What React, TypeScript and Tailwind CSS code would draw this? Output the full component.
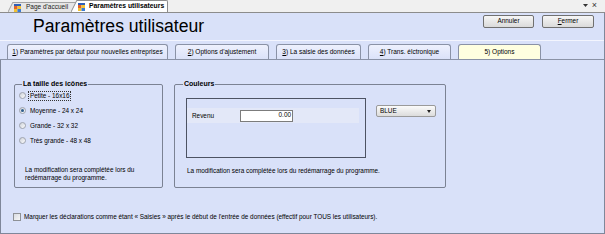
import React from "react";

const small = "text-[6.4px] leading-[8px] text-black";

function TabIcon() {
  return (
    <svg width="7" height="8" viewBox="0 0 7 8" className="shrink-0">
      <rect x="0" y="0" width="7" height="2" fill="#2f5fb8" />
      <rect x="0" y="2" width="3.5" height="3" fill="#e2622a" />
      <rect x="3.5" y="2" width="3.5" height="3" fill="#f2c232" />
      <rect x="0" y="5" width="3.5" height="3" fill="#f2c232" />
      <rect x="3.5" y="5" width="3.5" height="3" fill="#3a7bd5" />
    </svg>
  );
}

function Radio({ checked, label, focus }: { checked?: boolean; label: string; focus?: boolean }) {
  return (
    <div className="h-[15px] flex items-center">
      <div className="ml-[4px] w-[7px] h-[7px] rounded-full border border-[#9ea3ad] bg-gradient-to-br from-[#cfd3da] to-[#fbfbfb] flex items-center justify-center">
        {checked && <div className="w-[3px] h-[3px] rounded-full bg-[#2f5e8c]" />}
      </div>
      <span
        className={
          "ml-[2px] px-[1px] border border-dotted " +
          (focus ? "border-[#333]" : "border-transparent") +
          " " +
          small
        }
      >
        {label}
      </span>
    </div>
  );
}

function SubTab({ w, active, children }: { w: number; active?: boolean; children: React.ReactNode }) {
  return (
    <div
      style={{ width: w }}
      className={
        "h-[15px] rounded-t-[3px] border border-b-0 border-[#8a92a6] flex items-center justify-center text-[6.5px] text-black " +
        (active ? "bg-[#ffffe0]" : "bg-gradient-to-b from-[#eef1fd] to-[#dbe2f9]")
      }
    >
      {children}
    </div>
  );
}

export default function App() {
  return (
    <div className="w-[605px] h-[234px] bg-[#f0f0f0] flex flex-col overflow-hidden font-['Liberation_Sans',Arial,sans-serif]">
      {/* document tabs */}
      <div className="h-[13px] border-b border-[#8c8c8c] flex items-end shrink-0">
        <div className="w-[8px]" />
        <div className="flex items-end">
          <svg width="5" height="10" viewBox="0 0 5 10" className="block">
            <path d="M0 10 L5 0 L5 10 Z" fill="#e6e6e6" />
            <path d="M0 10 L5 0" stroke="#a3a3a3" strokeWidth="1" fill="none" />
          </svg>
          <div className="h-[10px] w-[63px] bg-[#e6e6e6] border-t border-[#a3a3a3] flex items-center pl-[1px] gap-[5px]">
            <TabIcon />
            <span className="text-[6.5px] leading-none text-[#222]">Page d'accueil</span>
          </div>
        </div>
        <div className="flex items-end ml-[-5px] relative">
          <svg width="6" height="12" viewBox="0 0 6 12" className="block">
            <path d="M0 12 L6 0 L6 12 Z" fill="#ffffff" />
            <path d="M0 12 L6 0" stroke="#8c8c8c" strokeWidth="1" fill="none" />
          </svg>
          <div className="h-[12px] w-[91px] bg-white border-t border-r border-[#8c8c8c] rounded-tr-[2px] flex items-center pl-[1px] gap-[4px]">
            <TabIcon />
            <span className="text-[6.8px] leading-none font-bold text-black">Paramètres utilisateurs</span>
          </div>
        </div>
        <div className="flex-1" />
        <div className="self-center flex items-center gap-[4px] pr-[8px] pb-[2px] text-[#333]">
          <svg width="5" height="3" viewBox="0 0 5 3">
            <path d="M0 0 L5 0 L2.5 3 Z" fill="#333" />
          </svg>
          <span className="text-[9px] leading-none">×</span>
        </div>
      </div>

      {/* main panel */}
      <div className="flex-1 bg-[#d9e1f9] border-r border-[#7f879a] flex flex-col">
        <div className="h-[27px] flex items-start shrink-0">
          <div className="ml-[33px] mt-[5px] text-[17.6px] leading-[17px] text-black">Paramètres utilisateur</div>
          <div className="flex-1" />
          <div className="mt-[2px] mr-[10px] flex gap-[8px]">
            <div className="w-[51px] h-[13px] rounded-[2px] border border-[#707070] bg-gradient-to-b from-[#f6f6f6] to-[#dadada] flex items-center justify-center text-[6.4px] leading-none text-black">
              Annuler
            </div>
            <div className="w-[52px] h-[13px] rounded-[2px] border border-[#707070] bg-gradient-to-b from-[#f6f6f6] to-[#dadada] flex items-center justify-center text-[6.4px] leading-none text-black">
              <span className="underline">F</span>ermer
            </div>
          </div>
        </div>
        <div className="h-px bg-[#f3f5fe] shrink-0" />
        <div className="h-[3px] shrink-0" />
        {/* sub tabs */}
        <div className="h-[16px] border-b border-[#8a92a6] flex items-end pl-[7px] gap-[7px] shrink-0">
          <SubTab w={161}>
            <span>
              <span className="underline">1</span>) Paramètres par défaut pour nouvelles entreprises
            </span>
          </SubTab>
          <SubTab w={94}>
            <span>
              <span className="underline">2</span>) Options d'ajustement
            </span>
          </SubTab>
          <SubTab w={85}>
            <span>
              <span className="underline">3</span>) La saisie des données
            </span>
          </SubTab>
          <SubTab w={83}>
            <span>
              <span className="underline">4</span>) Trans. élctronique
            </span>
          </SubTab>
          <SubTab w={83} active>
            <span>5) Options</span>
          </SubTab>
        </div>

        {/* page */}
        <div className="flex-1 border-l border-b border-[#7f879a] pl-[13px] pt-[20px] flex flex-col">
          <div className="flex items-start gap-[11px]">
            <fieldset className="w-[149px] h-[108px] border border-[#7b8293] rounded-[2px] px-0">
              <legend className="ml-[7px] px-[1px] text-[7px] leading-[8px] font-bold text-black">
                La taille des icônes
              </legend>
              <Radio label="Petite - 16x16" focus />
              <Radio label="Moyenne - 24 x 24" checked />
              <Radio label="Grande - 32 x 32" />
              <Radio label="Très grande - 48 x 48" />
              <div className={"ml-[10px] mt-[18px] " + small}>
                La modification sera complétée lors du
                <br />
                redémarrage du programme.
              </div>
            </fieldset>

            <fieldset className="w-[272px] h-[108px] border border-[#7b8293] rounded-[2px] px-0">
              <legend className="ml-[8px] px-[1px] text-[7px] leading-[8px] font-bold text-black">Couleurs</legend>
              <div className="ml-[11px] mt-[10px] flex items-start">
                <div className="w-[180px] h-[60px] border border-[#4d5363] pt-[9px]">
                  <div className="w-[172px] h-[15px] bg-[#e3e8f8] flex items-center pl-[5px]">
                    <span className={"w-[48px] " + small}>Revenu</span>
                    <div className="w-[53px] h-[12px] bg-white border border-[#7c7c7c] flex items-center justify-end pr-[1px] text-[6.4px] leading-none text-black">
                      0.00
                    </div>
                  </div>
                </div>
                <div className="ml-[10px] mt-[7px] w-[60px] h-[12px] rounded-[2px] border border-[#9a9a9a] bg-gradient-to-b from-[#fbfbfb] to-[#dcdcdc] flex items-center justify-between pl-[3px] pr-[4px]">
                  <span className="text-[6.4px] leading-none text-black">BLUE</span>
                  <svg width="4" height="3" viewBox="0 0 4 3">
                    <path d="M0 0 L4 0 L2 3 Z" fill="#222" />
                  </svg>
                </div>
              </div>
              <div className={"ml-[12px] mt-[9px] " + small}>
                La modification sera complétée lors du redémarrage du programme.
              </div>
            </fieldset>
          </div>

          <div className="mt-[24px] ml-[-1px] flex items-center h-[9px]">
            <div className="w-[8px] h-[8px] border border-[#8e9196] bg-gradient-to-br from-[#d9dce2] to-[#f7f7f7]" />
            <span className={"ml-[3px] " + small}>
              Marquer les déclarations comme étant « Saisies » après le début de l'entrée de données (effectif pour TOUS les utilisateurs).
            </span>
          </div>
        </div>
      </div>
    </div>
  );
}
